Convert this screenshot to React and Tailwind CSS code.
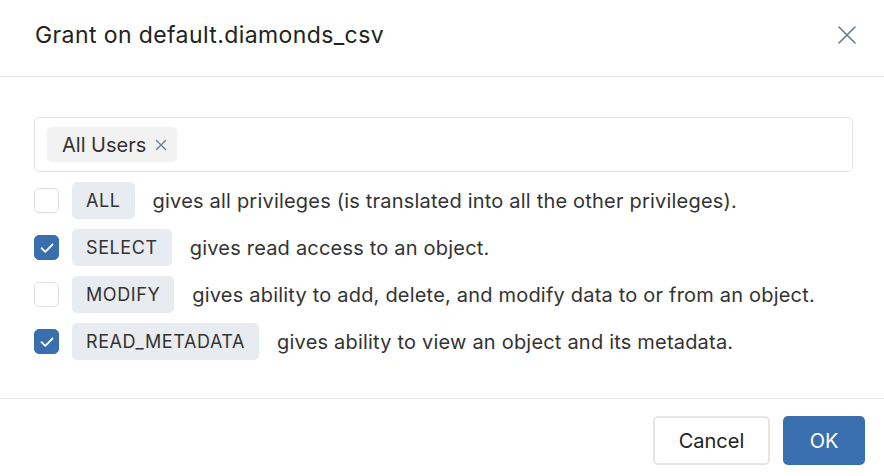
import React, { useState } from 'react';

const privileges = [
  { name: 'ALL', desc: 'gives all privileges (is translated into all the other privileges).', checked: false },
  { name: 'SELECT', desc: 'gives read access to an object.', checked: true },
  { name: 'MODIFY', desc: 'gives ability to add, delete, and modify data to or from an object.', checked: false },
  { name: 'READ_METADATA', desc: 'gives ability to view an object and its metadata.', checked: true },
];

const Checkbox = ({ checked, onChange }) => (
  <button
    type="button"
    onClick={onChange}
    className={`w-[25px] h-[25px] shrink-0 rounded-[5px] flex items-center justify-center ${
      checked ? 'bg-[#3a6faf] border border-[#3a6faf]' : 'bg-white border border-[#dedede]'
    }`}
  >
    {checked && (
      <svg width="16" height="16" viewBox="0 0 16 16">
        <path d="M2.5 8.2l3.8 3.6L13.5 4.5" fill="none" stroke="white" strokeWidth="1.8" strokeLinecap="round" strokeLinejoin="round" />
      </svg>
    )}
  </button>
);

const App = () => {
  const [checks, setChecks] = useState(privileges.map((p) => p.checked));

  const toggle = (i) => setChecks(checks.map((c, j) => (j === i ? !c : c)));

  return (
    <div className="w-[884px] h-[476px] bg-white flex flex-col text-[#222] font-['Inter','Liberation_Sans',sans-serif]">
      {/* header */}
      <div className="h-[77px] shrink-0 border-b border-[#e8e8e8] flex items-center justify-between pl-[35px] pr-[27px] pb-[6px]">
        <h2 className="text-[23px] font-normal tracking-[0.4px] text-[#222]">Grant on default.diamonds_csv</h2>
        <button type="button" className="w-[20px] h-[20px] flex items-center justify-center">
          <svg width="20" height="20" viewBox="0 0 20 20">
            <path d="M2 2l16 16M18 2L2 18" stroke="#66788a" strokeWidth="1.6" strokeLinecap="round" />
          </svg>
        </button>
      </div>

      {/* body */}
      <div className="flex-1 flex flex-col gap-[10px] pl-[34px] pr-[31px] pt-[40px]">
        <div className="h-[55px] border border-[#e3e3e3] rounded-[5px] flex items-center px-[12px]">
          <span className="h-[35px] bg-[#f2f2f2] rounded-[5px] flex items-center gap-[9px] pl-[15px] pr-[10px] text-[20px] text-[#333]">
            All Users
            <svg width="12" height="12" viewBox="0 0 12 12">
              <path d="M1.5 1.5l9 9M10.5 1.5l-9 9" stroke="#6b7b8c" strokeWidth="1.3" strokeLinecap="round" />
            </svg>
          </span>
        </div>

        {privileges.map((p, i) => (
          <div key={p.name} className="h-[37px] flex items-center">
            <Checkbox checked={checks[i]} onChange={() => toggle(i)} />
            <span className="ml-[13px] h-[37px] px-[14px] bg-[#e8ebef] rounded-[5px] flex items-center text-[18px] tracking-[0.6px] text-[#333]">
              {p.name}
            </span>
            <span className="ml-[18px] text-[20px] tracking-[0.2px] text-[#333]">{p.desc}</span>
          </div>
        ))}
      </div>

      {/* footer */}
      <div className="h-[78px] shrink-0 border-t border-[#e8e8e8] flex items-start justify-end gap-[13px] pt-[17px] pr-[19px]">
        <button type="button" className="w-[117px] h-[49px] rounded-[5px] border-2 border-[#e6e6e6] bg-white text-[20px] text-[#222]">
          Cancel
        </button>
        <button type="button" className="w-[82px] h-[49px] rounded-[5px] bg-[#3a6faf] text-[20px] text-white">
          OK
        </button>
      </div>
    </div>
  );
};

export default App;
